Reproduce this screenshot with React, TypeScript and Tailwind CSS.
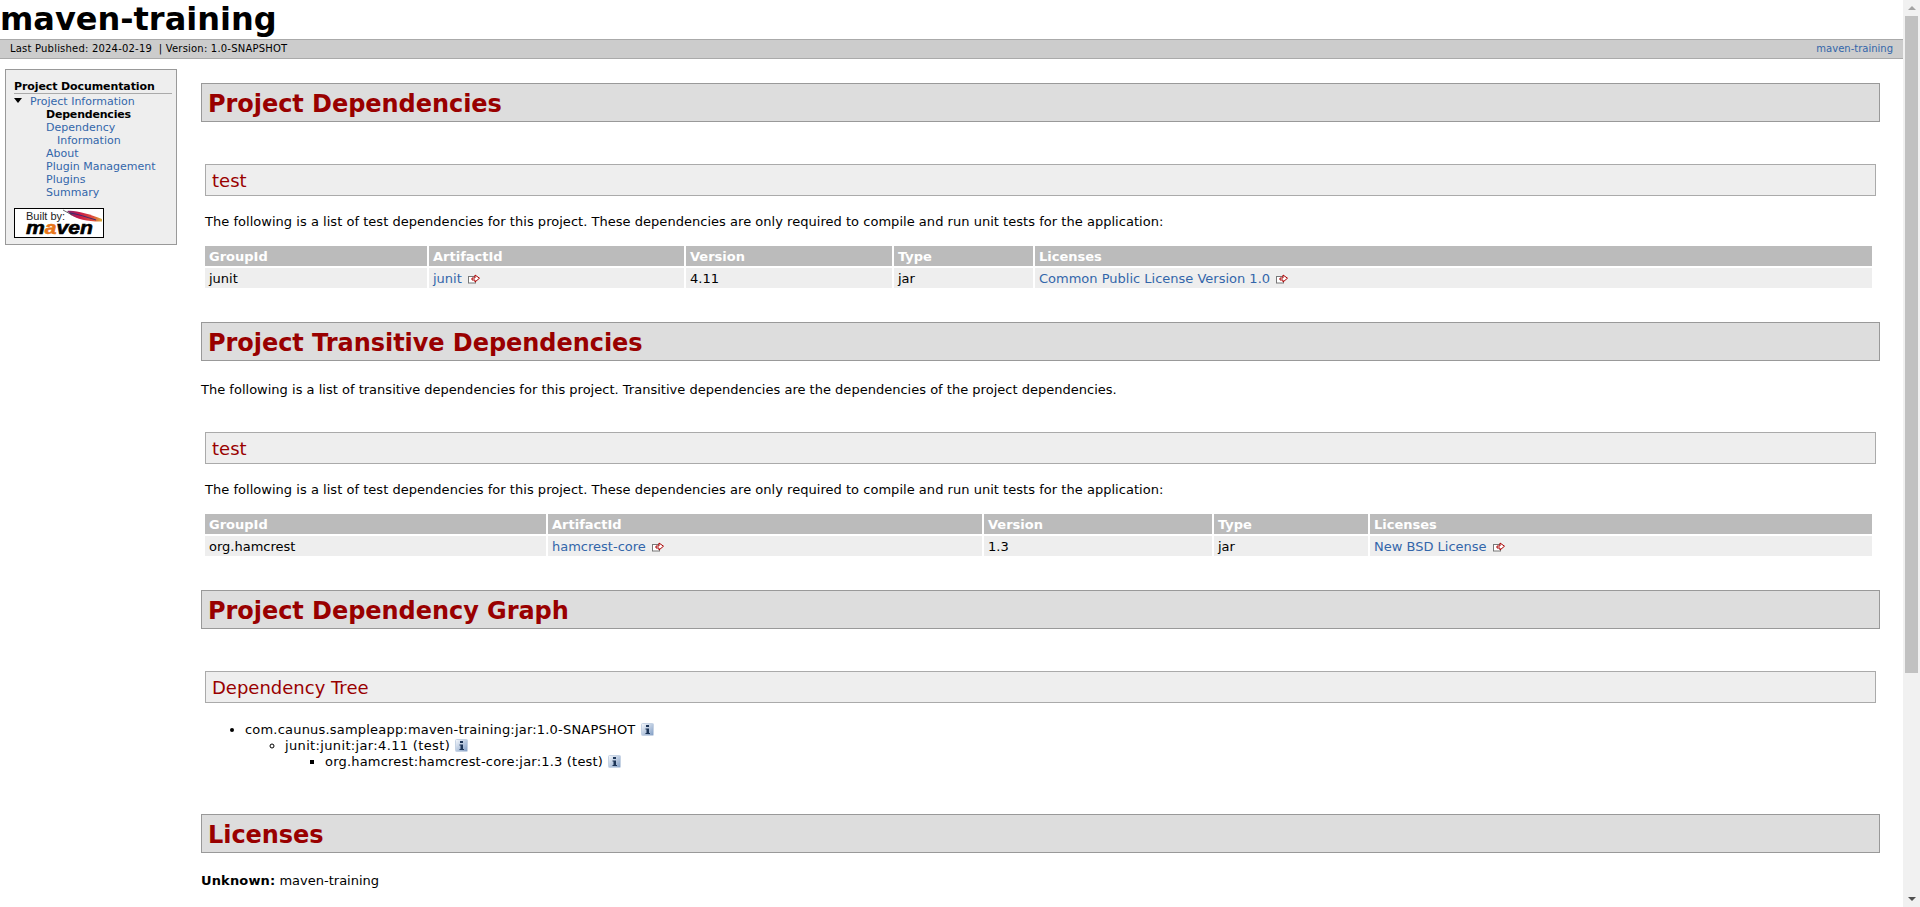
type Col = { title: string; width: string };

const navItems = [
  { label: "Dependency Information", wrap: true },
  { label: "About" },
  { label: "Plugin Management" },
  { label: "Plugins" },
  { label: "Summary" },
];

function ExternalIcon() {
  return (
    <svg viewBox="0 0 12 10" className="ml-[6px] inline-block h-[10px] w-[12px] align-[-1px]">
      <rect x="0.5" y="2.5" width="7" height="6.5" fill="#fff" stroke="#777" />
      <path d="M4 6 L4 4 L7 4 L7 1 L11.5 4.2 L7 8 L7 6 Z" fill="#fff" stroke="#a00" strokeWidth="1" />
    </svg>
  );
}

function InfoIcon() {
  return (
    <svg viewBox="0 0 13 13" className="ml-[5px] inline-block h-[13px] w-[13px] align-[-2px]">
      <defs>
        <linearGradient id="info-bg" x1="0" y1="0" x2="1" y2="1">
          <stop offset="0" stopColor="#f8fafd" />
          <stop offset="1" stopColor="#7f9cc4" />
        </linearGradient>
      </defs>
      <rect x="0.5" y="0.5" width="12" height="12" rx="1" fill="url(#info-bg)" stroke="#c6d3e4" />
      <rect x="5" y="2" width="3" height="2" fill="#1d3557" />
      <path d="M4.5 5.5 H8 V10 H9 V11 H4.5 V10 H5.5 V6.5 H4.5 Z" fill="#1d3557" />
    </svg>
  );
}

function MavenLogo() {
  return (
    <svg viewBox="0 0 90 30" className="block h-[30px] w-[90px]">
      <defs>
        <linearGradient id="feather" x1="0" y1="0" x2="1" y2="0">
          <stop offset="0" stopColor="#7a2a6e" />
          <stop offset="0.35" stopColor="#c8174a" />
          <stop offset="0.75" stopColor="#e0503a" />
          <stop offset="1" stopColor="#d9b23c" />
        </linearGradient>
      </defs>
      <rect x="0.5" y="0.5" width="89" height="29" fill="#fff" stroke="#000" />
      <text x="12" y="11.5" fontFamily="Liberation Sans, sans-serif" fontSize="11" fill="#222">
        Built by:
      </text>
      <path d="M53 3 C62 2 74 6 88 11 L88 13.5 C76 14 62 11 57 7 Z" fill="url(#feather)" />
      <path d="M56 5 C64 6 72 9 82 12" stroke="#3a2a70" strokeWidth="1" fill="none" />
      <path d="M49 2 L58 7" stroke="#444" strokeWidth="0.8" />
      <text x="12" y="26" textLength="67" lengthAdjust="spacingAndGlyphs" fontFamily="Liberation Sans, sans-serif" fontSize="19" fontWeight="700" fontStyle="italic" stroke="#000" strokeWidth="0.6">
        m<tspan fill="#e8761a" stroke="#e8761a">a</tspan>ven
      </text>
    </svg>
  );
}

function Sidebar() {
  return (
    <aside className="ml-[5px] mt-[10px] h-[176px] w-[172px] shrink-0 border border-[#999] bg-[#eee] pl-[8px] pr-[4px] pt-[11px] text-[11px] leading-[13px]">
      <h5 className="border-b border-[#aaa] text-[11px] font-bold leading-[12px] tracking-[-0.1px] text-black">Project Documentation</h5>
      <div className="relative mt-[1px] pl-[16px] text-[#36a]">
        <span className="absolute left-0 top-[3px] h-0 w-0 border-x-[4px] border-t-[5px] border-x-transparent border-t-black" />
        Project Information
      </div>
      <ul className="pl-[32px] text-[#36a]">
        <li className="font-bold tracking-[-0.2px] text-black">Dependencies</li>
        {navItems.map((n) => (
          <li key={n.label} className={n.wrap ? "w-[80px] pl-[11px] -indent-[11px]" : ""}>
            {n.label}
          </li>
        ))}
      </ul>
      <div className="mt-[9px]">
        <MavenLogo />
      </div>
    </aside>
  );
}

function H2({ children, className }: { children: string; className?: string }) {
  return (
    <h2 className={`flex h-[39px] items-center border border-[#999] bg-[#ddd] pl-[6px] pt-[2px] text-[24px] font-bold tracking-[-0.05px] text-[#900] ${className ?? ""}`}>
      {children}
    </h2>
  );
}

function H3({ children, className }: { children: string; className?: string }) {
  return (
    <h3 className={`mx-[4px] flex h-[32px] items-center border border-[#aaa] bg-[#eee] pl-[6px] pt-[1px] text-[18px] text-[#900] ${className ?? ""}`}>
      {children}
    </h3>
  );
}

function DepTable({ cols, row, className }: { cols: Col[]; row: [string, string, string, string, string]; className?: string }) {
  return (
    <table className={`ml-[2px] table-fixed border-separate border-spacing-[2px] ${className ?? ""}`} style={{ width: "1671px" }}>
      <colgroup>
        {cols.map((c) => (
          <col key={c.title} style={{ width: c.width }} />
        ))}
      </colgroup>
      <thead>
        <tr>
          {cols.map((c) => (
            <th key={c.title} className="h-[20px] bg-[#bbb] px-[4px] pb-0 pt-[1px] text-left font-bold leading-[14px] text-white">
              {c.title}
            </th>
          ))}
        </tr>
      </thead>
      <tbody>
        <tr>
          <td className="h-[20px] bg-[#eee] px-[4px] pb-0 pt-[1px]">{row[0]}</td>
          <td className="bg-[#eee] px-[4px] pb-0 pt-[1px] text-[#36a]">
            {row[1]}
            <ExternalIcon />
          </td>
          <td className="bg-[#eee] px-[4px] pb-0 pt-[1px]">{row[2]}</td>
          <td className="bg-[#eee] px-[4px] pb-0 pt-[1px]">{row[3]}</td>
          <td className="bg-[#eee] px-[4px] pb-0 pt-[1px] text-[#36a]">
            {row[4]}
            <ExternalIcon />
          </td>
        </tr>
      </tbody>
    </table>
  );
}

const firstCols: Col[] = [
  { title: "GroupId", width: "222px" },
  { title: "ArtifactId", width: "255px" },
  { title: "Version", width: "206px" },
  { title: "Type", width: "139px" },
  { title: "Licenses", width: "837px" },
];

const secondCols: Col[] = [
  { title: "GroupId", width: "341px" },
  { title: "ArtifactId", width: "434px" },
  { title: "Version", width: "228px" },
  { title: "Type", width: "154px" },
  { title: "Licenses", width: "502px" },
];

const testNote =
  "The following is a list of test dependencies for this project. These dependencies are only required to compile and run unit tests for the application:";

function Scrollbar() {
  return (
    <div className="flex h-full w-[17px] shrink-0 flex-col items-center bg-[#f1f1f1]">
      <div className="flex h-[16px] shrink-0 items-center justify-center">
        <span className="h-0 w-0 border-x-[4px] border-b-[4px] border-x-transparent border-b-[#a3a3a3]" />
      </div>
      <div className="h-[657px] w-[13px] shrink-0 bg-[#c1c1c1]" />
      <div className="flex-1" />
      <div className="flex h-[16px] shrink-0 items-center justify-center">
        <span className="h-0 w-0 border-x-[4px] border-t-[4px] border-x-transparent border-t-[#505050]" />
      </div>
    </div>
  );
}

export default function App() {
  return (
    <div className="flex h-[907px] overflow-hidden bg-white font-['DejaVu_Sans',Verdana,sans-serif] text-[13px] leading-[16px] text-black">
      <div className="min-w-0 flex-1">
        <header className="h-[39px]">
          <h1 className="text-[32px] font-bold leading-[39px] text-black">maven-training</h1>
        </header>
        <div className="flex h-[20px] items-center justify-between border-y border-[#aaa] bg-[#ccc] pl-[10px] pr-[10px] text-[10px]">
          <span className="tracking-[0.2px]">Last Published: 2024-02-19&nbsp; | Version: 1.0-SNAPSHOT</span>
          <span className="text-[#36a]">maven-training</span>
        </div>
        <div className="flex items-start">
          <Sidebar />
          <main className="ml-[24px] mr-[23px] mt-[24px] min-w-0 flex-1">
            <H2>Project Dependencies</H2>
            <H3 className="mt-[42px]">test</H3>
            <p className="mx-[4px] mt-[18px] tracking-[0.03px]">{testNote}</p>
            <DepTable className="mt-[14px]" cols={firstCols} row={["junit", "junit", "4.11", "jar", "Common Public License Version 1.0"]} />

            <H2 className="mt-[32px]">Project Transitive Dependencies</H2>
            <p className="mt-[21px] tracking-[0.01px]">
              The following is a list of transitive dependencies for this project. Transitive dependencies are the dependencies of the project dependencies.
            </p>
            <H3 className="mt-[34px]">test</H3>
            <p className="mx-[4px] mt-[18px] tracking-[0.03px]">{testNote}</p>
            <DepTable className="mt-[14px]" cols={secondCols} row={["org.hamcrest", "hamcrest-core", "1.3", "jar", "New BSD License"]} />

            <H2 className="mt-[32px]">Project Dependency Graph</H2>
            <H3 className="mt-[42px]">Dependency Tree</H3>
            <ul className="ml-[44px] mt-[19px] list-disc tracking-[0.2px]">
              <li>
                com.caunus.sampleapp:maven-training:jar:1.0-SNAPSHOT
                <InfoIcon />
                <ul className="ml-[40px] list-[circle]">
                  <li>
                    <span className="tracking-[0.35px]">junit:junit:jar:4.11 (test)</span>
                    <InfoIcon />
                    <ul className="ml-[40px] list-[square]">
                      <li>
                        org.hamcrest:hamcrest-core:jar:1.3 (test)
                        <InfoIcon />
                      </li>
                    </ul>
                  </li>
                </ul>
              </li>
            </ul>

            <H2 className="mt-[44px]">Licenses</H2>
            <p className="mt-[20px]">
              <b className="tracking-[0.15px]">Unknown:</b> maven-training
            </p>
            <p className="mt-[17px]">
              <b>Common Public License Version 1.0:</b> junit
            </p>
          </main>
        </div>
      </div>
      <Scrollbar />
    </div>
  );
}
